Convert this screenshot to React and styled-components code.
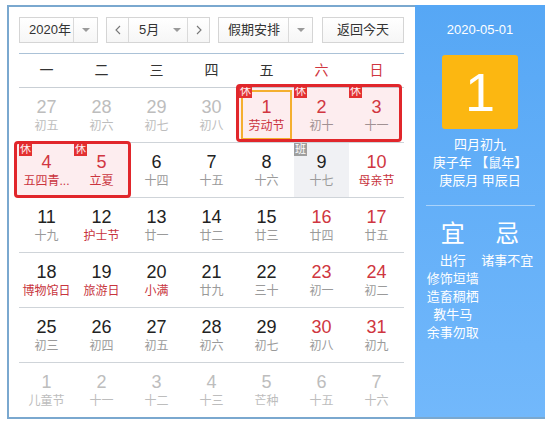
import React from 'react';
import styled, { createGlobalStyle, css } from 'styled-components';

const GlobalStyle = createGlobalStyle`
  html, body { margin: 0; padding: 0; background: #fff; }
  body { font-family: "Liberation Sans", "Noto Sans CJK SC", sans-serif; }
  * { box-sizing: border-box; }
`;

const FRAME = '#7aa8cf';
const RED = '#cf3640';

const Frame = styled.div`
  display: flex;
  margin: 5px 0 0 7px;
  width: 538px;
`;

const Main = styled.div`
  width: 408px;
  border: 2px solid ${FRAME};
  border-right: none;
  padding: 10px 11px 0 10px;
`;

const Toolbar = styled.div`
  display: flex;
  gap: 8px;
  height: 26px;
`;

const controlBase = css`
  height: 26px;
  border: 1px solid #d5d5d5;
  background: linear-gradient(#ffffff, #f6f6f6);
  font-size: 13px;
  color: #333;
`;

const Select = styled.div`
  ${controlBase};
  display: flex;
  width: ${p => p.$w}px;
`;

const SelectLabel = styled.div`
  flex: 1;
  padding-left: 9px;
  line-height: 24px;
  white-space: nowrap;
`;

const CaretBox = styled.div`
  width: 24px;
  border-left: 1px solid #dadada;
  display: flex;
  align-items: center;
  justify-content: center;
`;

const Triangle = styled.span`
  width: 0;
  height: 0;
  border-left: 4px solid transparent;
  border-right: 4px solid transparent;
  border-top: 4px solid #9a9a9a;
`;

const MonthGroup = styled.div`
  ${controlBase};
  display: flex;
  width: 104px;
`;

const NavBtn = styled.div`
  width: 22px;
  display: flex;
  align-items: center;
  justify-content: center;
  border-left: ${p => (p.$divider ? '1px solid #dadada' : 'none')};
  border-right: ${p => (p.$dividerRight ? '1px solid #dadada' : 'none')};
`;

const MonthMid = styled.div`
  flex: 1;
  display: flex;
  align-items: center;
  padding-left: 10px;
  gap: 14px;
  line-height: 24px;
`;

const Button = styled.div`
  ${controlBase};
  width: 82px;
  margin-left: 1px;
  text-align: center;
  line-height: 24px;
`;

const WeekHeader = styled.div`
  margin-top: 10px;
  display: grid;
  grid-template-columns: repeat(7, 1fr);
  border-top: 1px solid #abc2d7;
  border-bottom: 1px solid #c9cfd5;
  height: 35px;
`;

const WeekDay = styled.div`
  text-align: center;
  line-height: 33px;
  font-size: 14px;
  color: ${p => (p.$weekend ? RED : '#333')};
`;

const Grid = styled.div`
  position: relative;
  display: grid;
  grid-template-columns: repeat(7, 1fr);
`;

const numColor = {
  other: '#bdbdbd',
  normal: '#222',
  red: RED,
};

const Cell = styled.div`
  position: relative;
  height: 54px;
  padding-top: 8px;
  text-align: center;
  background: ${p => (p.$work ? '#f0f1f4' : 'transparent')};
  &:nth-child(n + 8) {
    height: 55px;
    border-top: 1px solid #cfd4d9;
  }
  ${p =>
    p.$today &&
    css`
      &::after {
        content: '';
        position: absolute;
        inset: 2px;
        border: 2px solid #f6bb2c;
      }
    `}
`;

const Num = styled.div`
  font-size: 18px;
  line-height: 22px;
  color: ${p => numColor[p.$tone]};
`;

const Lunar = styled.div`
  font-size: 12px;
  line-height: 16px;
  white-space: nowrap;
  overflow: hidden;
  color: ${p => (p.$tone === 'other' ? '#bdbdbd' : p.$fest ? '#c8343d' : '#9a9a9a')};
`;

const Badge = styled.span`
  position: absolute;
  top: ${p => p.$top}px;
  left: 0;
  width: 13px;
  height: 13px;
  font-size: 11px;
  line-height: 13px;
  color: #fff;
  text-align: center;
  background: ${p => (p.$kind === 'work' ? '#9e9e9e' : '#e3302f')};
  z-index: 1;
`;

const HolidayBox = styled.div`
  position: absolute;
  pointer-events: none;
  border: 3px solid #e1262b;
  border-radius: 4px;
  background: rgba(236, 60, 80, 0.09);
  z-index: 2;
`;

const Side = styled.div`
  width: 130px;
  background: linear-gradient(#56a7f5, #72b8fb);
  border-bottom: 2px solid ${FRAME};
  color: #fff;
  display: flex;
  flex-direction: column;
  align-items: center;
  padding-top: 16px;
`;

const DateText = styled.div`
  font-size: 13px;
  line-height: 18px;
`;

const DayBox = styled.div`
  margin-top: 16px;
  width: 76px;
  height: 74px;
  background: #fcb711;
  border-radius: 3px;
  display: flex;
  align-items: center;
  justify-content: center;
  font-size: 54px;
  line-height: 1;
  color: #fff;
`;

const LunarInfo = styled.div`
  margin-top: 7px;
  font-size: 13px;
  line-height: 18px;
  text-align: center;
`;

const Divider = styled.div`
  margin-top: 15px;
  width: 109px;
  height: 1px;
  background: rgba(255, 255, 255, 0.45);
`;

const YiJi = styled.div`
  display: flex;
  width: 109px;
`;

const YiJiCol = styled.div`
  flex: 1;
  display: flex;
  flex-direction: column;
  align-items: center;
`;

const YiJiTitle = styled.div`
  margin-top: 14px;
  font-size: 24px;
  line-height: 28px;
  margin-bottom: 4px;
`;

const YiJiItem = styled.div`
  font-size: 13px;
  line-height: 18px;
  white-space: nowrap;
`;

const Chevron = ({ dir }) => (
  <svg width="6" height="10" viewBox="0 0 6 10">
    <polyline
      points={dir === 'left' ? '5,1 1,5 5,9' : '1,1 5,5 1,9'}
      fill="none"
      stroke="#777"
      strokeWidth="1.1"
    />
  </svg>
);

// [day, lunar, tone, options]
const O = 'other';
const N = 'normal';
const R = 'red';
const rows = [
  [
    [27, '初五', O], [28, '初六', O], [29, '初七', O], [30, '初八', O],
    [1, '劳动节', R, { fest: 1, today: 1, badge: 'rest' }],
    [2, '初十', R, { badge: 'rest' }],
    [3, '十一', R, { badge: 'rest' }],
  ],
  [
    [4, '五四青...', R, { fest: 1, badge: 'rest' }],
    [5, '立夏', R, { fest: 1, badge: 'rest' }],
    [6, '十四', N], [7, '十五', N], [8, '十六', N],
    [9, '十七', N, { badge: 'work', work: 1 }],
    [10, '母亲节', R, { fest: 1 }],
  ],
  [
    [11, '十九', N], [12, '护士节', N, { fest: 1 }], [13, '廿一', N], [14, '廿二', N],
    [15, '廿三', N], [16, '廿四', R], [17, '廿五', R],
  ],
  [
    [18, '博物馆日', N, { fest: 1 }], [19, '旅游日', N, { fest: 1 }], [20, '小满', N, { fest: 1 }],
    [21, '廿九', N], [22, '三十', N], [23, '初一', R], [24, '初二', R],
  ],
  [
    [25, '初三', N], [26, '初四', N], [27, '初五', N], [28, '初六', N],
    [29, '初七', N], [30, '初八', R], [31, '初九', R],
  ],
  [
    [1, '儿童节', O], [2, '十一', O], [3, '十二', O], [4, '十三', O],
    [5, '芒种', O], [6, '十五', O], [7, '十六', O],
  ],
];

const holidayGroups = [
  { left: 217, top: -4, width: 166, height: 58 },
  { left: -5, top: 53, width: 117, height: 57 },
];

const weekdays = ['一', '二', '三', '四', '五', '六', '日'];

export default function App() {
  return (
    <>
      <GlobalStyle />
      <Frame>
        <Main>
          <Toolbar>
            <Select $w={79}>
              <SelectLabel>2020年</SelectLabel>
              <CaretBox><Triangle /></CaretBox>
            </Select>
            <MonthGroup>
              <NavBtn $dividerRight><Chevron dir="left" /></NavBtn>
              <MonthMid>
                <span>5月</span>
                <Triangle />
              </MonthMid>
              <NavBtn $divider><Chevron dir="right" /></NavBtn>
            </MonthGroup>
            <Select $w={95}>
              <SelectLabel>假期安排</SelectLabel>
              <CaretBox><Triangle /></CaretBox>
            </Select>
            <Button>返回今天</Button>
          </Toolbar>
          <WeekHeader>
            {weekdays.map((w, i) => (
              <WeekDay key={w} $weekend={i >= 5}>{w}</WeekDay>
            ))}
          </WeekHeader>
          <Grid>
            {rows.map((row, ri) =>
              row.map(([d, l, tone, opt = {}], ci) => (
                <Cell key={`${ri}-${ci}`} $work={opt.work} $today={opt.today}>
                  {opt.badge && (
                    <Badge $kind={opt.badge} $top={ri === 0 ? -3 : 0}>
                      {opt.badge === 'work' ? '班' : '休'}
                    </Badge>
                  )}
                  <Num $tone={tone}>{d}</Num>
                  <Lunar $tone={tone} $fest={opt.fest}>{l}</Lunar>
                </Cell>
              ))
            )}
            {holidayGroups.map((g, i) => (
              <HolidayBox
                key={i}
                style={{ left: g.left, top: g.top, width: g.width, height: g.height }}
              />
            ))}
          </Grid>
        </Main>
        <Side>
          <DateText>2020-05-01</DateText>
          <DayBox>1</DayBox>
          <LunarInfo>
            <div>四月初九</div>
            <div>庚子年 【鼠年】</div>
            <div>庚辰月 甲辰日</div>
          </LunarInfo>
          <Divider />
          <YiJi>
            <YiJiCol>
              <YiJiTitle>宜</YiJiTitle>
              <YiJiItem>出行</YiJiItem>
              <YiJiItem>修饰垣墙</YiJiItem>
              <YiJiItem>造畜稠栖</YiJiItem>
              <YiJiItem>教牛马</YiJiItem>
              <YiJiItem>余事勿取</YiJiItem>
            </YiJiCol>
            <YiJiCol>
              <YiJiTitle>忌</YiJiTitle>
              <YiJiItem>诸事不宜</YiJiItem>
            </YiJiCol>
          </YiJi>
        </Side>
      </Frame>
    </>
  );
}
